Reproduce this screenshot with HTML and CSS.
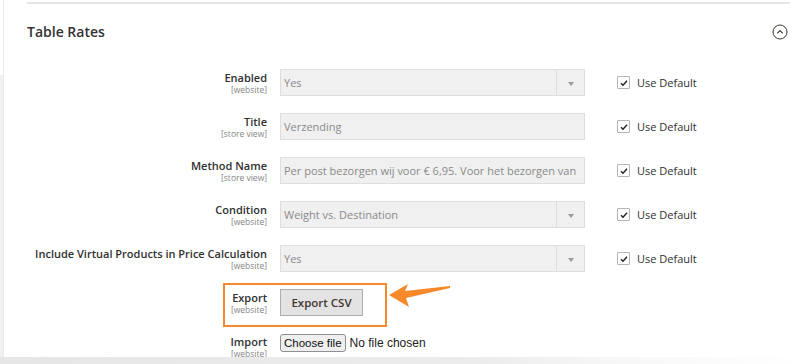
FILE: index.html
```html
<!DOCTYPE html>
<html lang="en">

<head>
    <meta charset="UTF-8">
    <meta name="viewport" content="width=device-width, initial-scale=1.0">
    <title>Table Rates</title>
    <link rel="stylesheet" href="styles.css">
</head>

<body>
    <div class="page">
        <div class="side-strip"></div>
        <div class="content">
            <div class="section">
                <div class="section-head">
                    <h2>Table Rates</h2>
                    <span class="collapse-icon">
                        <svg width="16" height="16" viewBox="0 0 16 16">
                            <circle cx="8" cy="8" r="7" fill="none" stroke="#41362f" stroke-width="1"/>
                            <path d="M5.2 9.3 L8 6.6 L10.8 9.3" fill="none" stroke="#41362f" stroke-width="1.1"/>
                        </svg>
                    </span>
                </div>

                <div class="config-rows">
                    <div class="row">
                        <div class="label"><span class="name">Enabled</span><span class="scope">[website]</span></div>
                        <div class="control select"><span class="value">Yes</span><span class="arrow"></span></div>
                        <div class="use-default"><span class="check"><svg width="8" height="8" viewBox="0 0 8 8"><path d="M1 4.2 L3 6.2 L7 1.8" fill="none" stroke="#222" stroke-width="1.4"/></svg></span>Use Default</div>
                    </div>
                    <div class="row">
                        <div class="label"><span class="name">Title</span><span class="scope">[store view]</span></div>
                        <div class="control"><span class="value">Verzending</span></div>
                        <div class="use-default"><span class="check"><svg width="8" height="8" viewBox="0 0 8 8"><path d="M1 4.2 L3 6.2 L7 1.8" fill="none" stroke="#222" stroke-width="1.4"/></svg></span>Use Default</div>
                    </div>
                    <div class="row">
                        <div class="label"><span class="name">Method Name</span><span class="scope">[store view]</span></div>
                        <div class="control"><span class="value">Per post bezorgen wij voor € 6,95. Voor het bezorgen van</span></div>
                        <div class="use-default"><span class="check"><svg width="8" height="8" viewBox="0 0 8 8"><path d="M1 4.2 L3 6.2 L7 1.8" fill="none" stroke="#222" stroke-width="1.4"/></svg></span>Use Default</div>
                    </div>
                    <div class="row">
                        <div class="label"><span class="name">Condition</span><span class="scope">[website]</span></div>
                        <div class="control select"><span class="value">Weight vs. Destination</span><span class="arrow"></span></div>
                        <div class="use-default"><span class="check"><svg width="8" height="8" viewBox="0 0 8 8"><path d="M1 4.2 L3 6.2 L7 1.8" fill="none" stroke="#222" stroke-width="1.4"/></svg></span>Use Default</div>
                    </div>
                    <div class="row">
                        <div class="label"><span class="name">Include Virtual Products in Price Calculation</span><span class="scope">[website]</span></div>
                        <div class="control select"><span class="value">Yes</span><span class="arrow"></span></div>
                        <div class="use-default"><span class="check"><svg width="8" height="8" viewBox="0 0 8 8"><path d="M1 4.2 L3 6.2 L7 1.8" fill="none" stroke="#222" stroke-width="1.4"/></svg></span>Use Default</div>
                    </div>
                    <div class="row export-row">
                        <div class="label"><span class="name">Export</span><span class="scope">[website]</span></div>
                        <div><button class="export-btn">Export CSV</button></div>
                        <div class="highlight"></div>
                        <svg class="pointer" width="64" height="26" viewBox="0 0 64 26">
                            <path d="M1 12 L20 1 L17 8 L62 3 L62 5 L18 15 L21 24 Z" fill="#f7892a"/>
                        </svg>
                    </div>
                    <div class="row import-row">
                        <div class="label"><span class="name">Import</span><span class="scope">[website]</span></div>
                        <div class="file-input"><button class="file-btn">Choose file</button><span>No file chosen</span></div>
                    </div>
                </div>
            </div>
        </div>
    </div>
    <div class="bottom-shade"></div>
</body>

</html>
```

FILE: styles.css
```css
body {
    margin: 0;
    font-family: "Open Sans", Arial, sans-serif;
    color: #303030;
    background-color: #ffffff;
    height: 364px;
    overflow: hidden;
}

.page {
    display: flex;
    height: 357px;
    overflow: hidden;
}

.side-strip {
    width: 3px;
    background: linear-gradient(#ffffff 0, #ffffff 75px, #f1f1f1 75px);
    border-right: 1px solid #ebebeb;
}

.content {
    flex: 1;
    padding: 0 13px 0 23px;
}

.section {
    border-top: 2px solid #e6e6e6;
    margin-top: 2px;
}

.section-head {
    display: flex;
    justify-content: space-between;
    align-items: center;
    height: 50px;
    margin-top: 2px;
}

.section-head h2 {
    margin: 0;
    font-size: 14px;
    font-weight: 600;
    color: #333333;
}

.collapse-icon {
    display: flex;
    margin-right: 2px;
    margin-top: 2px;
}

.config-rows {
    margin-top: 13px;
}

.row {
    display: grid;
    grid-template-columns: 240px 305px auto;
    column-gap: 13px;
    align-items: start;
    height: 27px;
    margin-bottom: 17px;
    position: relative;
}

.label {
    display: flex;
    flex-direction: column;
    align-items: flex-end;
    text-align: right;
    white-space: nowrap;
    padding-top: 2px;
}

.label .name {
    font-size: 11px;
    font-weight: 600;
    line-height: 14px;
    color: #303030;
}

.label .scope {
    font-size: 8.5px;
    line-height: 10px;
    color: #858585;
}

.control {
    display: flex;
    align-items: center;
    height: 27px;
    box-sizing: border-box;
    border: 1px solid #dedede;
    background-color: #f0f0f0;
    overflow: hidden;
}

.control .value {
    flex: 1;
    padding: 0 3px;
    font-size: 11px;
    color: #8a8a8a;
    white-space: nowrap;
    overflow: hidden;
}

.select .arrow {
    width: 27px;
    height: 100%;
    border-left: 1px solid #dedede;
    position: relative;
}

.select .arrow::after {
    content: "";
    position: absolute;
    left: 11px;
    top: 12px;
    border-left: 3px solid transparent;
    border-right: 3px solid transparent;
    border-top: 4px solid #9a9a9a;
}

.use-default {
    display: flex;
    align-items: center;
    margin-left: 19px;
    height: 27px;
    font-size: 11px;
    color: #303030;
}

.check {
    display: flex;
    align-items: center;
    justify-content: center;
    width: 11px;
    height: 11px;
    border: 1px solid #b5b5b5;
    border-radius: 1px;
    background: #ffffff;
    margin-right: 7px;
}

.export-btn {
    width: 83px;
    height: 27px;
    border: 1px solid #adadad;
    background-color: #e3e3e3;
    font-family: "Open Sans", Arial, sans-serif;
    font-size: 11.5px;
    font-weight: 600;
    color: #41362f;
    padding: 0;
}

.highlight {
    position: absolute;
    left: 196px;
    top: -6px;
    width: 160px;
    height: 40px;
    border: 2px solid #f7892a;
}

.pointer {
    position: absolute;
    left: 361px;
    top: -6px;
}

.import-row {
    height: 20px;
    margin-bottom: 0;
}

.file-input {
    display: flex;
    align-items: center;
    gap: 4px;
    font-family: "Liberation Sans", Arial, sans-serif;
    font-size: 12px;
    color: #202020;
    padding-top: 1px;
}

.file-btn {
    height: 18px;
    padding: 0 3px;
    border: 1px solid #8f8f8f;
    border-radius: 3px;
    background-color: #efefef;
    font-family: "Liberation Sans", Arial, sans-serif;
    font-size: 11.5px;
    color: #101010;
}

.bottom-shade {
    height: 7px;
    background: linear-gradient(90deg, #e6e6e6 0, #ececec 60%, #f6f6f6 75%, #ffffff 100%);
}
```
